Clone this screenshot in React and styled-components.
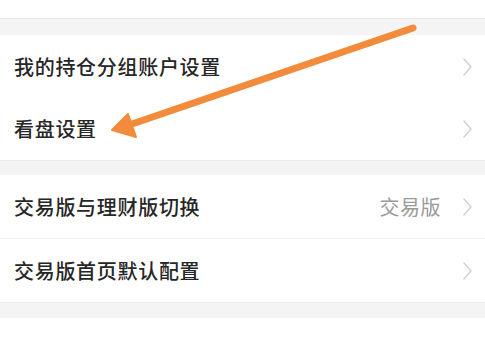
import React from "react";
import styled, { createGlobalStyle } from "styled-components";

const GlobalStyle = createGlobalStyle`
  html, body {
    margin: 0;
    padding: 0;
    background: #ffffff;
  }
  body {
    font-family: "Noto Sans CJK SC", "Noto Sans", sans-serif;
  }
`;

const Page = styled.div`
  position: relative;
  width: 485px;
  height: 337px;
  overflow: hidden;
  display: flex;
  flex-direction: column;
  background: #fff;
`;

const Stub = styled.div`
  height: ${(p) => p.h}px;
  background: #fff;
  flex-shrink: 0;
`;

const Gap = styled.div`
  height: ${(p) => p.h}px;
  background: #f4f4f4;
  border-top: 1px solid #ebebeb;
  box-sizing: border-box;
  flex-shrink: 0;
`;

const Section = styled.div`
  display: flex;
  flex-direction: column;
  background: #fff;
`;

const Row = styled.div`
  height: ${(p) => p.h}px;
  display: flex;
  align-items: center;
  padding: 0 13px 0 14px;
  box-sizing: border-box;
  border-bottom: ${(p) => (p.divider ? "1px solid #efefef" : "none")};
`;

const Label = styled.span`
  flex: 1;
  font-size: 20px;
  font-weight: 500;
  letter-spacing: 0.7px;
  color: #262626;
  line-height: 1;
`;

const Value = styled.span`
  font-size: 20px;
  letter-spacing: 0.5px;
  color: #9a9a9a;
  line-height: 1;
  margin-right: 22px;
`;

const Chevron = () => (
  <svg width="9" height="18" viewBox="0 0 9 18">
    <path d="M1 1 L8 9 L1 17" fill="none" stroke="#d0d0d0" strokeWidth="1.4" strokeLinecap="round" strokeLinejoin="round" />
  </svg>
);

const Arrow = styled.svg`
  position: absolute;
  left: 0;
  top: 0;
  pointer-events: none;
`;

const Item = ({ label, value, h, divider }) => (
  <Row h={h} divider={divider}>
    <Label>{label}</Label>
    {value && <Value>{value}</Value>}
    <Chevron />
  </Row>
);

export default function App() {
  return (
    <>
      <GlobalStyle />
      <Page>
        <Stub h={18} />
        <Gap h={17} />
        <Section>
          <Item label="我的持仓分组账户设置" h={63} />
          <Item label="看盘设置" h={62} />
        </Section>
        <Gap h={15} />
        <Section>
          <Item label="交易版与理财版切换" value="交易版" h={64} divider />
          <Item label="交易版首页默认配置" h={63} />
        </Section>
        <Gap h={16} />
        <Stub h={19} />
        <Arrow width="485" height="337" viewBox="0 0 485 337">
          <line x1="413" y1="28" x2="132" y2="124" stroke="#f28b3c" strokeWidth="7" strokeLinecap="round" />
          <polygon points="112,130 128,114 136,137" fill="#f28b3c" stroke="#f28b3c" strokeWidth="2" strokeLinejoin="round" />
        </Arrow>
      </Page>
    </>
  );
}
